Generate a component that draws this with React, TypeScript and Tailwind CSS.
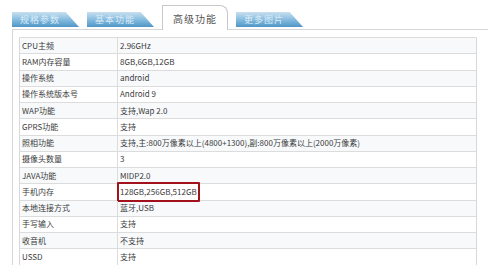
import React from "react";

const rows: [string, string][] = [
  ["CPU主频", "2.96GHz"],
  ["RAM内存容量", "8GB,6GB,12GB"],
  ["操作系统", "android"],
  ["操作系统版本号", "Android 9"],
  ["WAP功能", "支持,Wap 2.0"],
  ["GPRS功能", "支持"],
  ["照相功能", "支持,主:800万像素以上(4800+1300),副:800万像素以上(2000万像素)"],
  ["摄像头数量", "3"],
  ["JAVA功能", "MIDP2.0"],
  ["手机内存", "128GB,256GB,512GB"],
  ["本地连接方式", "蓝牙,USB"],
  ["手写输入", "支持"],
  ["收音机", "不支持"],
  ["USSD", "支持"],
];

const font = { fontFamily: '"Noto Sans CJK SC", "DejaVu Sans", sans-serif' };

const Tab = ({ label }: { label: string }) => (
  <div className="w-[67px] h-[15px] mt-[7px] mr-[8px] flex items-center pl-[8px] text-[9px] tracking-[1px] text-[#dcebf6] bg-gradient-to-b from-[#c9e0ef] via-[#86bde0] to-[#4f95c6] [clip-path:polygon(0_0,80%_0,100%_100%,0_100%)]">
    {label}
  </div>
);

export default function App() {
  return (
    <div className="w-[500px] h-[265px] bg-white overflow-hidden relative" style={font}>
      {/* tabs */}
      <div className="flex items-start h-[30px] pl-[12px] pt-[5px]">
        <Tab label="规格参数" />
        <Tab label="基本功能" />
        <div className="w-[66px] h-[25px] mr-[8px] border border-b-0 border-[#c8c8c8] rounded-tr-[8px] bg-white flex items-center justify-center text-[10px] tracking-[1px] text-[#555] relative z-10">
          高级功能
        </div>
        <Tab label="更多图片" />
      </div>

      {/* panel */}
      <div className="mx-[12px] -mt-[1px] border-t border-l border-[#d6d6d6] pl-[6px] pt-[7px] pr-[19px]">
        <div className="border-l border-r border-[#d8d8d8] w-[458px]">
          {rows.map(([k, v], i) => (
            <div
              key={k}
              className={`flex h-[16.25px] border-t border-[#dcdcdc] text-[8px] leading-none text-[#3c3c3c] ${
                i % 2 === 0 ? "bg-[#f7f9fb]" : "bg-white"
              }`}
            >
              <div className="w-[98px] border-r border-[#dcdcdc] flex items-center pl-[2px]">{k}</div>
              <div className="flex-1 flex items-center pl-[2px]">
                {k === "手机内存" ? (
                  <span className="border-2 border-[#a3111c] rounded-[1px] px-[1px] py-[4px] -ml-[3px]">{v}</span>
                ) : (
                  v
                )}
              </div>
            </div>
          ))}
        </div>
      </div>
    </div>
  );
}
